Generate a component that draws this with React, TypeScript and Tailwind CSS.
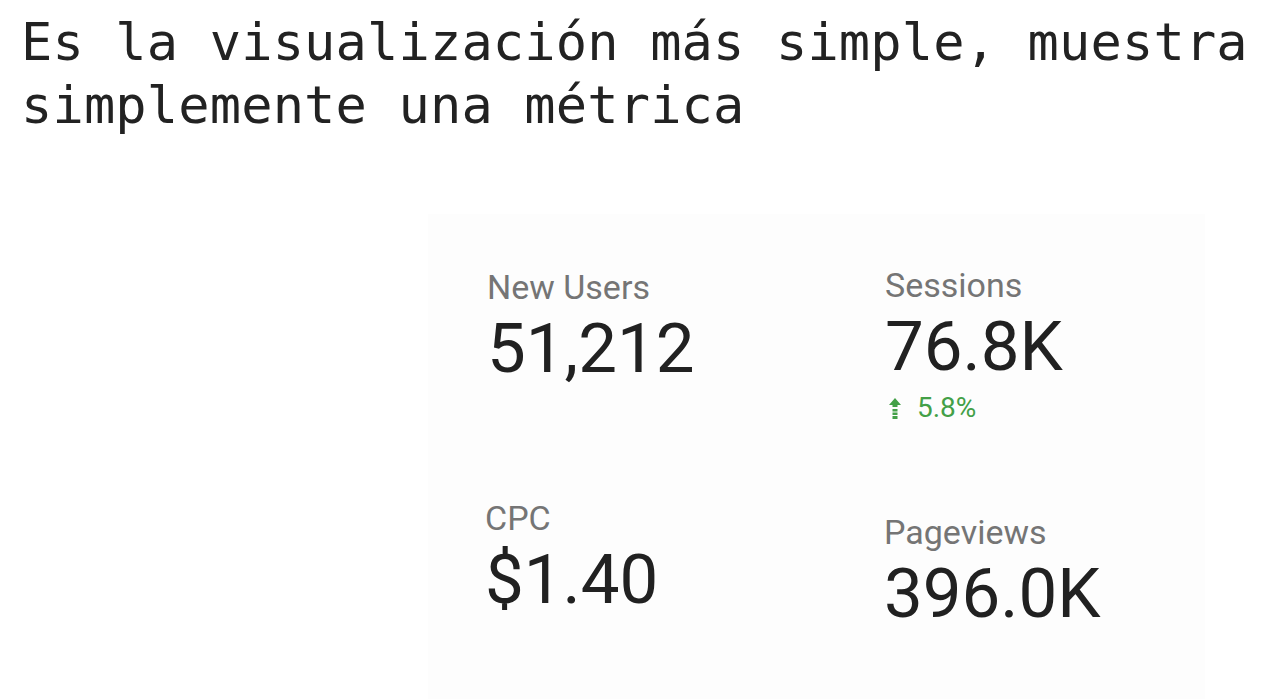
import React from "react";

interface Metric {
  label: string;
  value: string;
  delta?: string;
}

function UpArrow() {
  return (
    <svg width="12" height="21" viewBox="0 0 12 21" className="shrink-0">
      <path d="M6 0 L12 7 L8.5 7 L8.5 9 L3.5 9 L3.5 7 L0 7 Z" fill="#43a047" />
      <rect x="3.5" y="11" width="5" height="2.5" fill="#43a047" />
      <rect x="3.5" y="14.5" width="5" height="2.5" fill="#43a047" />
      <rect x="3.5" y="18" width="5" height="3" fill="#43a047" />
    </svg>
  );
}

function Scorecard({ label, value, delta }: Metric) {
  return (
    <div className="flex flex-col">
      <span className="text-[34px] leading-none text-[#757575]">{label}</span>
      <span className="mt-[10px] text-[69px] leading-none text-[#212121]">{value}</span>
      {delta && (
        <div className="mt-[13px] flex items-center gap-[16px] pl-[4px]">
          <UpArrow />
          <span className="text-[28px] leading-none text-[#43a047]">{delta}</span>
        </div>
      )}
    </div>
  );
}

export default function App() {
  return (
    <div className="flex h-[699px] w-[1283px] flex-col overflow-hidden bg-white">
      <h1
        className="pl-[21px] pt-[11px] text-[52px] font-normal leading-[63px] tracking-[0.15px] text-[#222222]"
        style={{ fontFamily: '"DejaVu Sans Mono", "Liberation Mono", monospace' }}
      >
        Es la visualización más simple, muestra
        <br />
        simplemente una métrica
      </h1>

      <div
        className="ml-[428px] mt-[77px] grid w-[777px] flex-1 grid-cols-[398px_1fr] bg-[#fdfdfd] pl-[59px]"
        style={{ fontFamily: "Roboto, 'Noto Sans', sans-serif" }}
      >
        <div className="flex flex-col pt-[56px]">
          <Scorecard label="New Users" value="51,212" />
          <div className="-ml-[2px] mt-[118px]">
            <Scorecard label="CPC" value="$1.40" />
          </div>
        </div>
        <div className="flex flex-col pt-[54px]">
          <Scorecard label="Sessions" value="76.8K" delta="5.8%" />
          <div className="-ml-[1px] mt-[93px]">
            <Scorecard label="Pageviews" value="396.0K" />
          </div>
        </div>
      </div>
    </div>
  );
}
